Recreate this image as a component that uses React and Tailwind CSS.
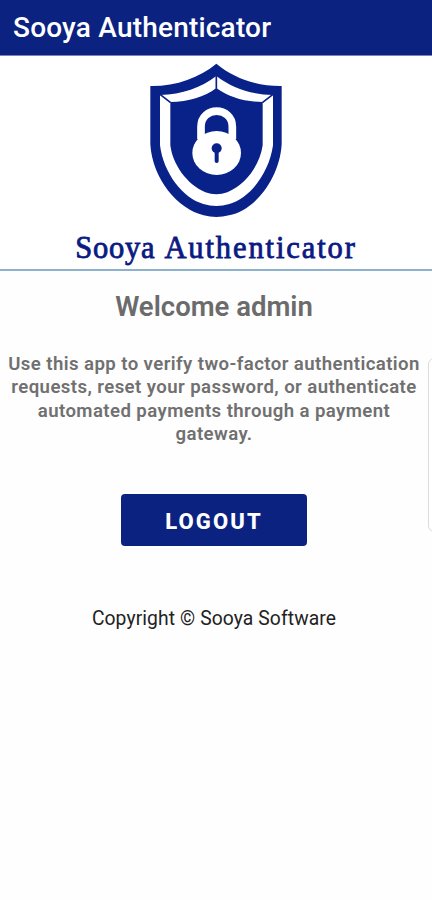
import { useState } from 'react'

function ShieldLogo() {
  return (
    <svg className="w-[152px] h-[170px]" viewBox="0 0 456 510" fill="none">
      {/* Outer shield */}
      <path
        fill="#09228a"
        d="M229 23C280 65 348 91 425 90V265C419 370 340 467 267 478Q229 488 191 478C115 460 37 370 31 265V90C108 91 178 65 229 23Z"
      />
      {/* White band */}
      <path
        fill="white"
        d="M229 60C277 96 330 115 399 117V268C388 350 330 427 268 444Q229 456 190 444C128 427 70 350 60 268V117C128 115 181 96 229 60Z"
      />
      {/* Inner shield */}
      <path
        fill="#09228a"
        d="M229 96C265 123 312 137 368 138V268C360 325 320 385 262 409Q229 421 196 409C140 385 98 325 91 268V138C146 137 193 123 229 96Z"
      />
      <path stroke="#09228a" strokeWidth="5" d="M229 58V98M399 115L367 140M60 115L92 140" />
      {/* Padlock */}
      <path stroke="white" strokeWidth="23" d="M183 250V212C183 150 277 150 277 212V250" />
      <ellipse cx="230" cy="291" rx="73" ry="66" fill="white" />
      <circle cx="230" cy="277" r="15" fill="#09228a" />
      <path stroke="#09228a" strokeWidth="12" strokeLinecap="round" d="M230 280V315" />
    </svg>
  )
}

export default function App() {
  const [user] = useState('admin')

  return (
    <div className="relative h-[900px] w-full overflow-hidden bg-[#fefefe] font-['Roboto',sans-serif]">
      <header className="h-14 bg-[#0b2281] border-b border-[#7b83bd] pl-[13px]">
        <h1 className="text-[28px] leading-[55px] font-medium tracking-[0.2px] text-white whitespace-nowrap">
          Sooya Authenticator
        </h1>
      </header>

      <section className="h-[215px] flex flex-col items-center border-b-2 border-[#8eb2ce] bg-white">
        <ShieldLogo />
        <p className="mt-1 flex gap-[9px] text-[30.5px] leading-9 text-[#0b1a83] [-webkit-text-stroke:0.8px_#0b1a83] font-['Liberation_Serif',serif] whitespace-nowrap">
          <span className="tracking-[0.8px]">Sooya</span>
          <span className="tracking-[1.9px]">Authenticator</span>
        </p>
      </section>

      <main className="flex flex-col items-center text-center">
        <h2 className="mt-[18px] mr-1 text-[27.5px] leading-9 font-semibold text-[#6b6b6b]">Welcome {user}</h2>
        <p className="mt-[28px] w-full pr-1 text-[18.6px] leading-[23.3px] font-semibold tracking-[0.42px] text-[#707070] whitespace-nowrap">
          Use this app to verify two-factor authentication
          <br />
          requests, reset your password, or authenticate
          <br />
          automated payments through a payment
          <br />
          gateway.
        </p>

        <button
          type="button"
          className="mt-[48px] mr-1 h-[52px] w-[186px] rounded-[4px] bg-[#0b2281] pt-0.5 text-[22px] font-extrabold tracking-[2.1px] text-white"
        >
          LOGOUT
        </button>

        <p className="mt-[60px] mr-1 text-[19.3px] leading-[26px] tracking-[0.1px] text-[#222] whitespace-nowrap">
          Copyright © Sooya Software
        </p>
      </main>

      {/* Edge panel handle */}
      <div className="absolute left-[428px] top-[358px] h-[174px] w-3 rounded-l-[6px] border border-[#dcdcdc] bg-white" />
    </div>
  )
}
